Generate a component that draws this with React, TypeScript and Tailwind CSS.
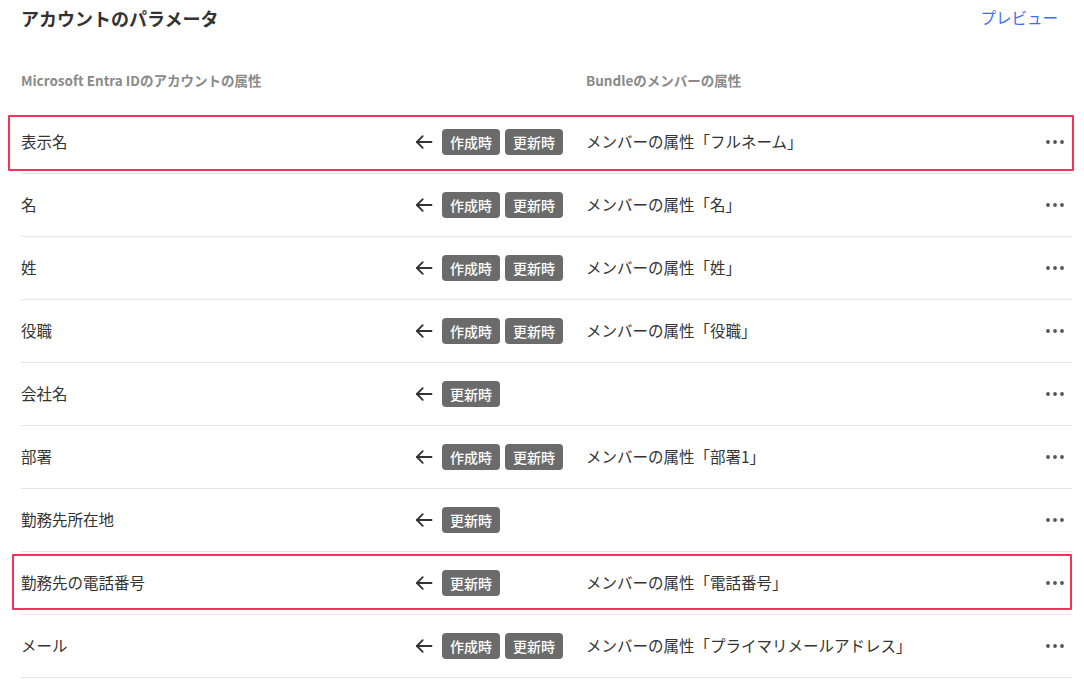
import React from "react";

type Row = {
  label: string;
  created?: boolean;
  member?: string;
  highlight?: string;
};

const rows: Row[] = [
  { label: "表示名", created: true, member: "メンバーの属性「フルネーム」", highlight: "first" },
  { label: "名", created: true, member: "メンバーの属性「名」" },
  { label: "姓", created: true, member: "メンバーの属性「姓」" },
  { label: "役職", created: true, member: "メンバーの属性「役職」" },
  { label: "会社名" },
  { label: "部署", created: true, member: "メンバーの属性「部署1」" },
  { label: "勤務先所在地" },
  { label: "勤務先の電話番号", member: "メンバーの属性「電話番号」", highlight: "second" },
  { label: "メール", created: true, member: "メンバーの属性「プライマリメールアドレス」" },
];

const ArrowLeft = () => (
  <svg width="20" height="20" viewBox="0 0 24 24" fill="none" stroke="#333" strokeWidth="2.2" strokeLinecap="round" strokeLinejoin="round">
    <path d="M21 12H3.5" />
    <path d="M10.5 19l-7-7 7-7" />
  </svg>
);

const Dots = () => (
  <svg width="18" height="4" viewBox="0 0 18 4" fill="#555">
    <circle cx="2" cy="2" r="1.9" />
    <circle cx="9" cy="2" r="1.9" />
    <circle cx="16" cy="2" r="1.9" />
  </svg>
);

const Badge = ({ children }: { children: React.ReactNode }) => (
  <span className="inline-flex h-[26px] items-center rounded-[4px] bg-[#6b6b6b] px-[8px] text-[14px] font-medium text-white">
    {children}
  </span>
);

const App = () => {
  return (
    <div
      className="min-h-[680px] w-full bg-white pl-[21px] pr-[12px] text-[#333]"
      style={{ fontFamily: '"Noto Sans CJK JP", "Noto Sans", sans-serif' }}
    >
      <div className="flex h-[36px] items-center justify-between">
        <h1 className="text-[18px] font-bold leading-none text-[#333]">アカウントのパラメータ</h1>
        <a href="#" className="mr-[14px] text-[15.5px] text-[#3d6ff2]">プレビュー</a>
      </div>

      <div className="flex h-[75px] items-center pt-[14px] text-[13.5px] font-bold text-[#8a8a8a]">
        <div className="w-[565px]">Microsoft Entra IDのアカウントの属性</div>
        <div>Bundleのメンバーの属性</div>
      </div>

      <div>
        {rows.map((r, i) => (
          <div key={i} className="relative flex h-[63px] items-center border-b border-[#e6e6e6] text-[15.5px]">
            {r.highlight === "first" && (
              <div className="pointer-events-none absolute left-[-13px] right-[-2px] top-[4px] h-[56px] rounded-[1px] border-[2.5px] border-[#f5325e]" />
            )}
            {r.highlight === "second" && (
              <div className="pointer-events-none absolute left-[-9px] right-0 top-[2px] h-[56px] rounded-[1px] border-[2.5px] border-[#f5325e]" />
            )}
            <div className="w-[393px]">{r.label}</div>
            <div className="flex w-[172px] items-center gap-[5px]">
              <span className="mr-[3px] flex items-center"><ArrowLeft /></span>
              {r.created && <Badge>作成時</Badge>}
              <Badge>更新時</Badge>
            </div>
            <div className="flex-1">{r.member}</div>
            <div className="mr-[8px] flex items-center"><Dots /></div>
          </div>
        ))}
      </div>
    </div>
  );
};

export default App;
